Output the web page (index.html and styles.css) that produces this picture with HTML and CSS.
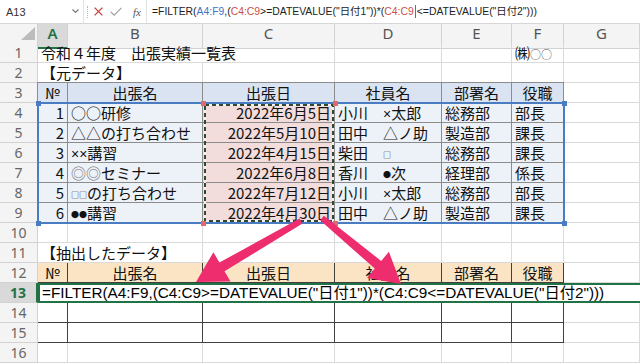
FILE: index.html
```html
<!DOCTYPE html>
<html lang="ja">
<head>
<meta charset="utf-8">
<title>FILTER</title>
<link rel="stylesheet" href="styles.css">
</head>
<body>
<div class="app">
  <div class="fbar">
    <div class="namebox"><span>A13</span><svg class="dd" width="7" height="5" viewBox="0 0 7 5"><polyline points="0.5,0.5 3.5,3.5 6.5,0.5" fill="none" stroke="#777" stroke-width="1.1"/></svg></div>
    <div class="fbtns">
      <span class="sep"></span>
      <svg class="ic-x" width="9" height="9" viewBox="0 0 9 9"><path d="M0.6 0.6 L8.4 8.4 M8.4 0.6 L0.6 8.4" stroke="#c8403a" stroke-width="1.3" fill="none"/></svg>
      <svg class="ic-ok" width="12" height="9" viewBox="0 0 12 9"><polyline points="0.6,4.6 4.2,8.2 11.4,0.8" fill="none" stroke="#9aa39a" stroke-width="1.2"/></svg>
      <span class="fx">fx</span>
    </div>
    <div class="finput">=FILTER(<span class="rb">A4:F9</span>,(<span class="rr">C4:C9</span>&gt;=DATEVALUE("日付1"))*(<span class="rr">C4:C9</span><span class="caret"></span>&lt;=DATEVALUE("日付2")))</div>
  </div>

  <div class="sheet">
    <div class="row hdr">
      <div class="corner"><svg width="38" height="19" viewBox="0 0 38 19"><polygon points="21,16 35,16 35,3" fill="#bcbcbc"/></svg></div>
      <div class="ch sel">A</div><div class="ch">B</div><div class="ch">C</div><div class="ch">D</div><div class="ch">E</div><div class="ch">F</div><div class="ch">G</div>
    </div>

    <div class="row"><div class="rh">1</div><div class="c s3">令和４年度　出張実績一覧表</div><div class="c"></div><div class="c"></div><div class="c">㈱<span class="sm2">○○</span></div><div class="c"></div></div>
    <div class="row"><div class="rh">2</div><div class="c s2">【元データ】</div><div class="c"></div><div class="c"></div><div class="c"></div><div class="c"></div><div class="c"></div></div>

    <div class="row"><div class="rh">3</div><div class="c t th top left">№</div><div class="c t th top">出張名</div><div class="c t th top">出張日</div><div class="c t th top">社員名</div><div class="c t th top">部署名</div><div class="c t th top">役職</div><div class="c"></div></div>
    <div class="row"><div class="rh">4</div><div class="c t r left">1</div><div class="c t">○○研修</div><div class="c t pink r">2022年6月5日</div><div class="c t">小川　<span class="lat">×</span>太郎</div><div class="c t">総務部</div><div class="c t">部長</div><div class="c"></div></div>
    <div class="row"><div class="rh">5</div><div class="c t r left">2</div><div class="c t">△△の打ち合わせ</div><div class="c t pink r">2022年5月10日</div><div class="c t">田中　△ノ助</div><div class="c t">製造部</div><div class="c t">課長</div><div class="c"></div></div>
    <div class="row"><div class="rh">6</div><div class="c t r left">3</div><div class="c t"><span class="lat">××</span>講習</div><div class="c t pink r">2022年4月15日</div><div class="c t">柴田　<span class="sm">□</span></div><div class="c t">総務部</div><div class="c t">課長</div><div class="c"></div></div>
    <div class="row"><div class="rh">7</div><div class="c t r left">4</div><div class="c t"><span class="gr">◎◎</span>セミナー</div><div class="c t pink r">2022年6月8日</div><div class="c t">香川　<span class="sm">●</span>次</div><div class="c t">経理部</div><div class="c t">係長</div><div class="c"></div></div>
    <div class="row"><div class="rh">8</div><div class="c t r left">5</div><div class="c t"><span class="sm">□□</span>の打ち合わせ</div><div class="c t pink r">2022年7月12日</div><div class="c t">小川　<span class="lat">×</span>太郎</div><div class="c t">総務部</div><div class="c t">部長</div><div class="c"></div></div>
    <div class="row"><div class="rh">9</div><div class="c t r left">6</div><div class="c t"><span class="sm">●●</span>講習</div><div class="c t pink r">2022年4月30日</div><div class="c t">田中　△ノ助</div><div class="c t">製造部</div><div class="c t">課長</div><div class="c"></div></div>

    <div class="row"><div class="rh">10</div><div class="c"></div><div class="c"></div><div class="c"></div><div class="c"></div><div class="c"></div><div class="c"></div><div class="c"></div></div>
    <div class="row"><div class="rh">11</div><div class="c s2">【抽出したデータ】</div><div class="c"></div><div class="c"></div><div class="c"></div><div class="c"></div><div class="c"></div></div>
    <div class="row"><div class="rh">12</div><div class="c u th">№</div><div class="c u th">出張名</div><div class="c u th">出張日</div><div class="c u th">社員名</div><div class="c u th">部署名</div><div class="c u th">役職</div><div class="c"></div></div>
    <div class="row"><div class="rh sel">13</div><div class="fcell">=FILTER(A4:F9,(C4:C9&gt;=DATEVALUE("日付1"))*(C4:C9&lt;=DATEVALUE("日付2")))</div></div>
    <div class="row"><div class="rh">14</div><div class="c u"></div><div class="c u"></div><div class="c u"></div><div class="c u"></div><div class="c u"></div><div class="c u"></div><div class="c"></div></div>
    <div class="row"><div class="rh">15</div><div class="c u"></div><div class="c u"></div><div class="c u"></div><div class="c u"></div><div class="c u"></div><div class="c u"></div><div class="c"></div></div>
    <div class="row"><div class="rh">16</div><div class="c"></div><div class="c"></div><div class="c"></div><div class="c"></div><div class="c"></div><div class="c"></div><div class="c"></div></div>
  </div>

  <svg class="overlay" width="640" height="364" viewBox="0 0 640 364">
    <rect x="38" y="103" width="526" height="120" fill="none" stroke="#4a7cc2" stroke-width="2"/>
    <rect x="205" y="105" width="128" height="116" fill="none" stroke="#f7f0f0" stroke-width="2"/>
    <rect x="205" y="105" width="128" height="116" fill="none" stroke="#2f4a30" stroke-width="2" stroke-dasharray="4 3"/>
    <g fill="#4a7cc2">
      <rect x="36" y="101" width="5" height="5"/>
      <rect x="562" y="101" width="5" height="5"/>
      <rect x="36" y="221" width="5" height="5"/>
      <rect x="562" y="221" width="5" height="5"/>
    </g>
    <g fill="#e06a6a">
      <rect x="201" y="101" width="5" height="5"/>
      <rect x="333" y="101" width="5" height="5"/>
      <rect x="201" y="221" width="5" height="5"/>
      <rect x="333" y="221" width="5" height="5"/>
    </g>
    <g fill="#ee2d6f">
      <polygon points="299.5,218.4 219.4,262.6 213.4,252.2 196,282 230.5,281.6 224.5,271.3 302.5,223.6"/>
      <polygon points="323.9,215.7 381.2,261.0 388.9,251.7 401,284 367.1,277.9 374.8,268.6 320.1,220.3"/>
    </g>
  </svg>
</div>
</body>
</html>
```

FILE: styles.css
```css
* { box-sizing: border-box; margin: 0; padding: 0; }

body {
  margin: 0;
  background: #fff;
  font-family: "Noto Sans CJK JP", "Noto Sans", sans-serif;
}

.app {
  position: relative;
  width: 640px;
  height: 364px;
  overflow: hidden;
  background: #fff;
}

/* formula bar */
.fbar {
  display: flex;
  height: 24px;
  background: #fff;
  border-bottom: 1px solid #d6d6d6;
}

.namebox {
  width: 84px;
  display: flex;
  align-items: center;
  justify-content: space-between;
  padding: 0 4px 0 6px;
  font: 11px "Liberation Sans", sans-serif;
  color: #333;
  border-right: 1px solid #e2e2e2;
}

.fbtns {
  width: 62px;
  display: flex;
  align-items: center;
}

.sep {
  width: 1px;
  height: 12px;
  margin-left: 3px;
  border-left: 1px dotted #b8b8b8;
}

.ic-x { margin-left: 6px; }
.ic-ok { margin-left: 7px; }

.fx {
  margin-left: 11px;
  font: italic 11px "Liberation Serif", serif;
  color: #555;
}

.finput {
  flex: 1;
  padding-left: 5px;
  border-left: 1px solid #e2e2e2;
  font: 10.4px/23px "Liberation Sans", "Noto Sans CJK JP", sans-serif;
  color: #222;
  white-space: nowrap;
  overflow: hidden;
}

.rb { color: #4472c4; }
.rr { color: #c8504a; }

.caret {
  display: inline-block;
  width: 1px;
  height: 13px;
  margin: 0 1px;
  vertical-align: -3px;
  background: #d04545;
}

/* sheet grid */
.row {
  display: grid;
  grid-template-columns: 38px 30px 135px 132px 107px 70px 52px 76px;
  height: 20px;
}

.row.hdr { height: 19px; }

.corner,
.ch,
.rh {
  background: #f4f4f4;
  border-right: 1px solid #d2d2d2;
  border-bottom: 1px solid #d2d2d2;
  color: #555;
}

.ch {
  font: 15px/18px "Noto Sans", sans-serif;
  text-align: center;
}

.rh {
  font: 14px/19px "Noto Sans", sans-serif;
  text-align: center;
  color: #666;
}

.ch.sel {
  background: #d9d9d9;
  color: #217346;
  font-weight: 600;
  border-bottom: 2px solid #217346;
}

.rh.sel {
  background: #d9d9d9;
  color: #217346;
  font-weight: 700;
  border-right: 2px solid #217346;
}

.c {
  border-right: 1px solid #dadada;
  border-bottom: 1px solid #dadada;
  padding: 0 3px;
  font-size: 15px;
  line-height: 19px;
  color: #111;
  white-space: nowrap;
  overflow: hidden;
}

.s2 { grid-column: span 2; }
.s3 { grid-column: span 3; }

.r { text-align: right; }

.sm { font-size: 8px; vertical-align: 1px; }
.sm2 { font-size: 11px; color: #555; }
.lat { font-family: "Liberation Sans", sans-serif; font-size: 14px; }
.gr { color: #777; }

/* source table */
.c.t {
  border-right-color: #8c8c8c;
  border-bottom-color: #8c8c8c;
  background: #edf2f9;
}

.c.t.th {
  background: #d9e3f1;
  text-align: center;
}

.c.t.pink { background: #f2dcdc; }

.c.t.top { box-shadow: 0 -1px 0 #8c8c8c; }
.c.t.left { box-shadow: -1px 0 0 #8c8c8c; }
.c.t.top.left { box-shadow: 0 -1px 0 #8c8c8c, -1px 0 0 #8c8c8c, -1px -1px 0 #8c8c8c; }

/* output table */
.c.u {
  border-right-color: #404040;
  border-bottom-color: #404040;
}

.c.u.th {
  background: #fbe4c3;
  text-align: center;
}

.fcell {
  grid-column: span 7;
  border: 2px solid #217346;
  border-right: none;
  padding-left: 2px;
  font: 15.3px/16px "Liberation Sans", "Noto Sans CJK JP", sans-serif;
  color: #000;
  white-space: nowrap;
  overflow: hidden;
}

.overlay {
  position: absolute;
  left: 0;
  top: 0;
  pointer-events: none;
}
```
